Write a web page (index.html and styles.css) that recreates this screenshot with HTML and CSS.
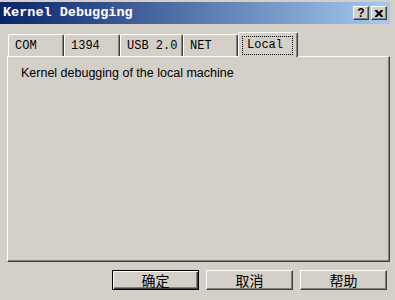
FILE: index.html
```html
<!DOCTYPE HTML>
<html>
<head>
<link rel="stylesheet" href="styles.css">
</head>
<body>

<div class="dialog">
  <!-- Title bar -->
  <div class="titlebar">
    <span class="title">Kernel Debugging</span>
    <div class="caption-buttons">
      <div class="caption-btn help-btn">?</div>
      <div class="caption-btn">
        <svg width="8" height="7" viewBox="0 0 8 7">
          <path d="M0 0h2l2 2 2-2h2v1l-2.5 2.5 2.5 2.5v1h-2l-2-2-2 2h-2v-1l2.5-2.5-2.5-2.5z" fill="#000"/>
        </svg>
      </div>
    </div>
  </div>

  <!-- Tabs -->
  <div class="tabs">
    <div class="tab" style="width: 56px">COM</div>
    <div class="tab" style="width: 56px">1394</div>
    <div class="tab" style="width: 63px">USB 2.0</div>
    <div class="tab" style="width: 55px">NET</div>
    <div class="tab selected" style="width: 60px"><span class="focus">Local</span></div>
  </div>

  <div class="panel">
    <div class="panel-text">Kernel debugging of the local machine</div>
  </div>

  <!-- Dialog buttons -->
  <div class="buttons">
    <div class="btn default">确定</div>
    <div class="btn">取消</div>
    <div class="btn">帮助</div>
  </div>
</div>

</body>
</html>
```

FILE: styles.css
```css
body {
  margin: 0;
  padding: 0;
  width: 395px;
  height: 300px;
  overflow: hidden;
  background-color: #d4d0c8;
  font-family: "Liberation Sans", Arial, sans-serif;
}

.dialog {
  width: 390px;
  padding-top: 2px;
}

/* Title bar */
.titlebar {
  height: 22px;
  display: flex;
  align-items: center;
  justify-content: space-between;
  padding: 0 3px;
  background: linear-gradient(to right, #0a246a, #a6caf0);
}

.title {
  color: white;
  font: bold 13.5px "Liberation Mono", monospace;
  line-height: 22px;
}

.caption-buttons {
  display: flex;
  gap: 2px;
}

.caption-btn {
  width: 16px;
  height: 14px;
  box-sizing: border-box;
  display: flex;
  align-items: center;
  justify-content: center;
  background-color: #d4d0c8;
  border: 1px solid;
  border-color: #fff #404040 #404040 #fff;
  box-shadow: inset -1px -1px #808080;
}

.help-btn {
  font: bold 12px "Liberation Sans", Arial, sans-serif;
  line-height: 12px;
}

/* Tabs */
.tabs {
  display: flex;
  align-items: flex-end;
  height: 24px;
  margin-top: 8px;
  padding-left: 8px;
}

.tab {
  height: 22px;
  box-sizing: border-box;
  padding: 1px 0 0 6px;
  font: 12px "Liberation Mono", monospace;
  line-height: 20px;
  color: #000;
  border-top: 1px solid #fff;
  border-left: 1px solid #fff;
  border-right: 1px solid #404040;
  box-shadow: inset -1px 0 #808080;
  border-radius: 2px 2px 0 0;
}

.tab.selected {
  position: relative;
  height: 25px;
  margin-bottom: -1px;
  padding: 2px 0 0 3px;
  background-color: #d4d0c8;
  z-index: 1;
}

.focus {
  display: inline-block;
  padding: 0 9px 0 4px;
  line-height: 17px;
  border: 1px dotted #000;
}

/* Panel */
.panel {
  height: 206px;
  margin-left: 7px;
  box-sizing: border-box;
  border: 1px solid;
  border-color: #fff #404040 #404040 #fff;
  box-shadow: inset -1px -1px #808080;
  padding: 9px 13px;
}

.panel-text {
  font-size: 12.5px;
  color: #000;
}

/* Buttons */
.buttons {
  display: flex;
  justify-content: flex-end;
  gap: 7px;
  margin-top: 8px;
  margin-left: 7px;
  width: 380px;
}

.btn {
  width: 87px;
  height: 20px;
  box-sizing: border-box;
  text-align: center;
  font: 14px "Noto Sans CJK SC", sans-serif;
  line-height: 18px;
  color: #000;
  border: 1px solid;
  border-color: #fff #404040 #404040 #fff;
  box-shadow: inset -1px -1px #808080;
}

.btn.default {
  border-color: #000;
  box-shadow: inset 1px 1px #fff, inset -1px -1px #404040, inset -2px -2px #808080;
}
```
